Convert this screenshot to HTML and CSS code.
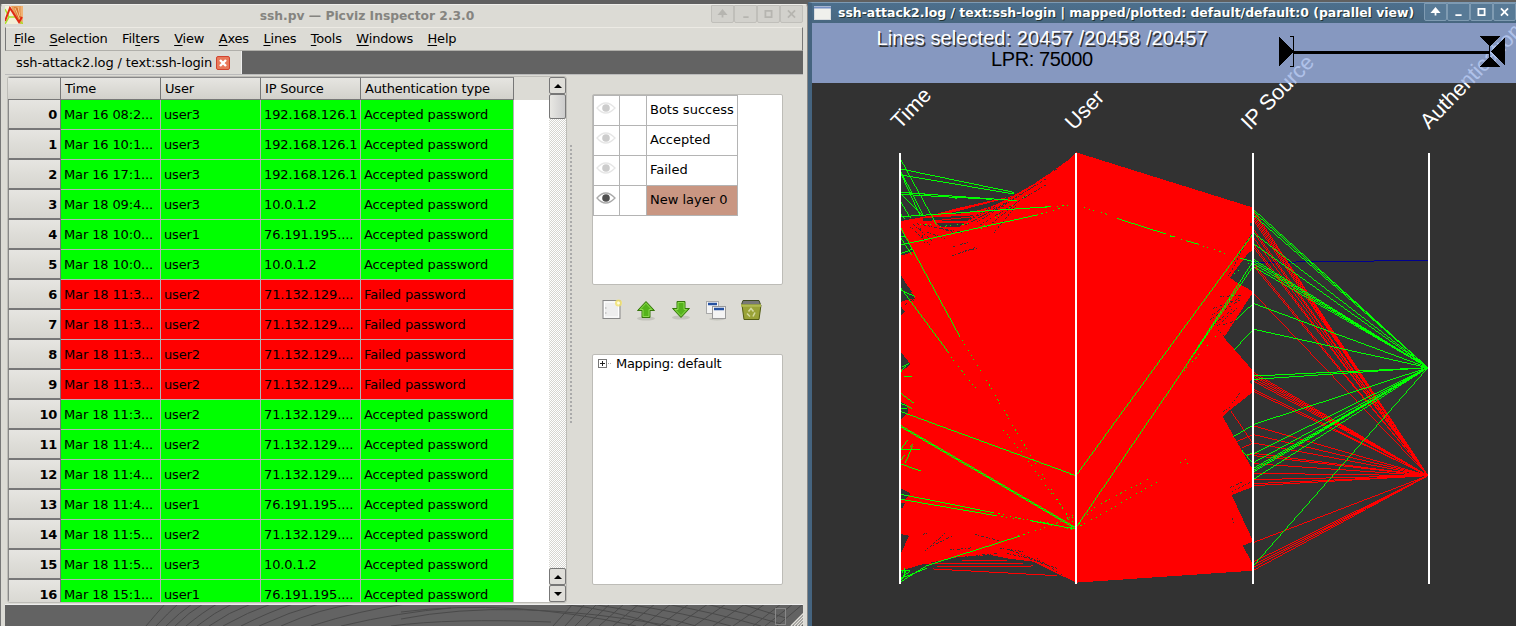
FILE: index.html
```html
<!DOCTYPE html>
<html lang="en">
<head>
<meta charset="utf-8">
<title>Picviz Inspector</title>
<link rel="stylesheet" href="styles.css">
</head>
<body>
<div class="desktop">
<section class="win main-win">
  <header class="titlebar">
    <svg class="app-icon" width="18" height="18" viewBox="0 0 18 18"><rect width="18" height="18" fill="#f3efd8"/><path d="M6 0h12v18h-3L8 6z" fill="#e9a05c"/><path d="M9 1l5 1 3 14-5-5z" fill="#d9742e"/><path d="M10 2l5 12M13 1l2 9M17 0v18" stroke="#f6c58c" fill="none"/><path d="M0 3l4 8-4 7M4 11h6l8 7" stroke="#a9e02a" stroke-width="1.500" fill="none"/><path d="M0 15L5 2l9 14 3-5" stroke="#e02a14" stroke-width="2" fill="none"/></svg>
    <div class="title">ssh.pv — Picviz Inspector 2.3.0</div>
    <div class="wbtns">
      <svg viewBox="0 0 23 18"><path d="M11.500 5v8M8 9l3.500-4 3.500 4z"/></svg>
      <svg viewBox="0 0 23 18"><path d="M9 12.500h6"/></svg>
      <svg viewBox="0 0 23 18"><path d="M8 5.500h7v7H8z" class="hollow"/></svg>
      <svg viewBox="0 0 23 18"><path d="M7.500 5l8 8M15.500 5l-8 8"/></svg>
    </div>
  </header>
  <nav class="menu"><span><u>F</u>ile</span><span><u>S</u>election</span><span>Fil<u>t</u>ers</span><span><u>V</u>iew</span><span><u>A</u>xes</span><span><u>L</u>ines</span><span><u>T</u>ools</span><span><u>W</u>indows</span><span><u>H</u>elp</span></nav>
  <div class="tabs"><div class="tab"><span>ssh-attack2.log / text:ssh-login</span><svg width="14" height="14" viewBox="0 0 14 14"><rect x=".5" y=".5" width="13" height="13" rx="1.500" fill="#e8795a" stroke="#d2432e"/><path d="M4 4l6 6M10 4l-6 6" stroke="#fff" stroke-width="2.400"/></svg></div></div>
  <div class="content">
    <div class="table-frame">
      <div class="table-view">
      <table class="grid">
        <thead><tr><th class="num"></th><th class="c1">Time</th><th class="c2">User</th><th class="c3">IP Source</th><th class="c4">Authentication type</th></tr></thead>
        <tbody>
        <tr><th>0</th><td>Mar 16 08:2...</td><td>user3</td><td>192.168.126.1</td><td>Accepted password</td></tr>
        <tr><th>1</th><td>Mar 16 10:1...</td><td>user3</td><td>192.168.126.1</td><td>Accepted password</td></tr>
        <tr><th>2</th><td>Mar 16 17:1...</td><td>user3</td><td>192.168.126.1</td><td>Accepted password</td></tr>
        <tr><th>3</th><td>Mar 18 09:4...</td><td>user3</td><td>10.0.1.2</td><td>Accepted password</td></tr>
        <tr><th>4</th><td>Mar 18 10:0...</td><td>user1</td><td>76.191.195....</td><td>Accepted password</td></tr>
        <tr><th>5</th><td>Mar 18 10:0...</td><td>user3</td><td>10.0.1.2</td><td>Accepted password</td></tr>
        <tr class="fail"><th>6</th><td>Mar 18 11:3...</td><td>user2</td><td>71.132.129....</td><td>Failed password</td></tr>
        <tr class="fail"><th>7</th><td>Mar 18 11:3...</td><td>user2</td><td>71.132.129....</td><td>Failed password</td></tr>
        <tr class="fail"><th>8</th><td>Mar 18 11:3...</td><td>user2</td><td>71.132.129....</td><td>Failed password</td></tr>
        <tr class="fail"><th>9</th><td>Mar 18 11:3...</td><td>user2</td><td>71.132.129....</td><td>Failed password</td></tr>
        <tr><th>10</th><td>Mar 18 11:3...</td><td>user2</td><td>71.132.129....</td><td>Accepted password</td></tr>
        <tr><th>11</th><td>Mar 18 11:4...</td><td>user2</td><td>71.132.129....</td><td>Accepted password</td></tr>
        <tr><th>12</th><td>Mar 18 11:4...</td><td>user2</td><td>71.132.129....</td><td>Accepted password</td></tr>
        <tr><th>13</th><td>Mar 18 11:4...</td><td>user1</td><td>76.191.195....</td><td>Accepted password</td></tr>
        <tr><th>14</th><td>Mar 18 11:5...</td><td>user2</td><td>71.132.129....</td><td>Accepted password</td></tr>
        <tr><th>15</th><td>Mar 18 11:5...</td><td>user3</td><td>10.0.1.2</td><td>Accepted password</td></tr>
        <tr><th>16</th><td>Mar 18 15:1...</td><td>user1</td><td>76.191.195....</td><td>Accepted password</td></tr>
        </tbody>
      </table>
      </div>
      <div class="scroll">
        <div class="sbtn"><i class="up"></i></div>
        <div class="thumb"></div>
        <div class="track"></div>
        <div class="sbtn"><i class="up"></i></div>
        <div class="sbtn"><i class="down"></i></div>
      </div>
    </div>
    <div class="splitter"></div>
    <aside class="side">
      <div class="layers">
        <table>
          <tr><td class="eye"><svg width="20" height="12" viewBox="0 0 20 12"><path d="M1 6q8.500-10 18 0q-9.500 10-18 0z" fill="#fff" stroke="#e6e6e6" stroke-width="1.300"/><circle cx="10" cy="6" r="3.800" fill="#ccc"/></svg></td><td class="lock"></td><td class="lname">Bots success</td></tr>
          <tr><td class="eye"><svg width="20" height="12" viewBox="0 0 20 12"><path d="M1 6q8.500-10 18 0q-9.500 10-18 0z" fill="#fff" stroke="#e6e6e6" stroke-width="1.300"/><circle cx="10" cy="6" r="3.800" fill="#ccc"/></svg></td><td></td><td class="lname">Accepted</td></tr>
          <tr><td class="eye"><svg width="20" height="12" viewBox="0 0 20 12"><path d="M1 6q8.500-10 18 0q-9.500 10-18 0z" fill="#fff" stroke="#e6e6e6" stroke-width="1.300"/><circle cx="10" cy="6" r="3.800" fill="#ccc"/></svg></td><td></td><td class="lname">Failed</td></tr>
          <tr><td class="eye"><svg width="20" height="12" viewBox="0 0 20 12"><path d="M1 6q8.500-10 18 0q-9.500 10-18 0z" fill="#fff" stroke="#aaa" stroke-width="1.300"/><circle cx="10" cy="6" r="3.800" fill="#505050"/></svg></td><td></td><td class="lname sel">New layer 0</td></tr>
        </table>
      </div>
      <div class="tools">
        <svg width="22" height="24" viewBox="0 0 22 24"><rect x="3" y="3.500" width="17" height="18" fill="#eee" stroke="#888"/><rect x="4.500" y="5" width="14" height="15" fill="none" stroke="#fff"/><path d="M5 11h1.500M5 16h1.500" stroke="#aaa"/><circle cx="18.500" cy="6" r="3.500" fill="#f4e36a" opacity=".8"/><circle cx="18.500" cy="6" r="1.500" fill="#fffce0"/></svg>
        <svg width="22" height="24" viewBox="0 0 22 24"><ellipse cx="11" cy="21.500" rx="9" ry="2" fill="#c4c4bd"/><path d="M11 4.500l8.500 9h-4.500v7H7v-7H2.500z" fill="#55b31c" stroke="#37760c"/><path d="M11 6.200l5.800 6.300H14v7H8v-7H5z" fill="none" stroke="#8bd94e"/></svg>
        <svg width="22" height="24" viewBox="0 0 22 24"><ellipse cx="11" cy="20.500" rx="9" ry="2" fill="#c4c4bd"/><path d="M11 20.500l8.500-9h-4.500v-7H7v7H2.500z" fill="#55b31c" stroke="#37760c"/><path d="M11 18.700l5.800-6.200H14v-7H8v7H5z" fill="none" stroke="#8bd94e"/></svg>
        <svg width="22" height="24" viewBox="0 0 22 24"><ellipse cx="12" cy="22" rx="8" ry="1.500" fill="#c4c4bd"/><rect x="1.500" y="4.500" width="12" height="12" fill="#f4f4f4" stroke="#aaa"/><path d="M3 7h9" stroke="#2551a0" stroke-width="2.500"/><rect x="7.500" y="9.500" width="13" height="12" fill="#f4f4f4" stroke="#999"/><path d="M9 12h10" stroke="#2551a0" stroke-width="2.500"/></svg>
        <svg width="22" height="24" viewBox="0 0 22 24"><path d="M2 8h19l-2 14.500H4z" fill="#9aa338" stroke="#535d14"/><path d="M3 3.500h16l1.500 4H1.500z" fill="#777" stroke="#3f4a20"/><path d="M1 8.500h20" stroke="#b0ba52" stroke-width="2.500"/><path d="M8.500 14.500l2.500-3 2.500 3M15 15.500l-2 4M10 19.500l-3-3" stroke="#d3d9a0" stroke-width="1.600" fill="none"/></svg>
      </div>
      <div class="tree"><svg width="14" height="11" viewBox="0 0 14 11"><rect x=".5" y="1.500" width="8" height="8" fill="#fff" stroke="#777"/><path d="M2 5.500h5M4.500 3v5" stroke="#222"/><path d="M10 5.500h4" stroke="#aaa" stroke-dasharray="1 1"/></svg><span>Mapping: default</span></div>
    </aside>
  </div>
  <footer class="status">
    <svg width="799" height="21" viewBox="4 605 799 21"><g stroke="#4a4a4a" fill="none" stroke-width="1"><path d="M145 626q10-12 19-22M155 626q12-13 22-22M165 626q14-14 26-22M174 626q14-14 28-22M185 626q17-14 31-22M196 626q18-14 35-22M208 626q20-14 42-22M222 626q25-14 48-22M240 626q28-14 52-22M258 626q30-14 60-22M280 626q40-18 75-22M310 626q50-16 95-22M340 626q60-14 110-18M390 626q60-8 160-4"/><path d="M400 619q110-22 270 7M400 612q110-14 235 14M560 604q50 5 100 22M590 604q60 9 105 22M625 604q60 9 105 22M665 604q50 9 95 22M705 604q40 9 75 20M740 604l45 14"/><path d="M552 626l20-22M564 626l20-22M574 626l22-22M585 626l24-22M598 626l25-22M612 626l26-22M627 626l27-22M642 626l28-22M658 626l30-22M675 626l32-22M693 626l32-22M712 626l32-22M732 626l32-22M752 626l28-22M764 626l28-22M776 626l26-22"/></g><rect x="774.500" y="608.500" width="10" height="16" fill="none" stroke="#888"/><path d="M790 626l13-13M793 626l10-10M796 626l7-7M799 626l4-4" stroke="#e4e2dc" stroke-width="1.500"/></svg>
  </footer>
</section>

<section class="win plot-win">
  <header class="ptitle">
    <svg width="17" height="14" viewBox="0 0 17 14"><rect x=".5" y=".5" width="16" height="13" fill="#f0f0ec" stroke="#d9dcdf"/><path d="M0 1.500h17" stroke="#7590c4" stroke-width="2"/></svg>
    <div class="title">ssh-attack2.log / text:ssh-login | mapped/plotted: default/default:0 (parallel view)</div>
    <div class="wbtns">
      <svg viewBox="0 0 23 18"><path d="M11.500 5v8M8 9l3.500-4 3.500 4z"/></svg>
      <svg viewBox="0 0 23 18"><path d="M8 12.500h7"/></svg>
      <svg viewBox="0 0 23 18"><path d="M8 5.500h7v7H8z" class="hollow"/></svg>
      <svg viewBox="0 0 23 18"><path d="M7.500 5l8 8M15.500 5l-8 8"/></svg>
    </div>
  </header>
  <svg class="plot" width="704" height="603" viewBox="812 23 704 603">
    <rect x="812" y="23" width="704" height="603" fill="#323232"/>
    <g class="lines">
    <!-- Time to User -->
    <g transform="translate(890 145) scale(.33333)">
      <path class="area" d="M33 228L120 212 200 190 370 152 430 118 500 70 535 45 560 22V1313L500 1285 430 1250 350 1240 300 1230 200 1237 100 1257 33 1277z"/>
      <path class="hole" d="M170 207L345 161 365 156 300 186 230 205zM100 219L250 211 235 227 100 227zM140 233H225L210 245H150zM33 255L70 320 33 332zM33 390L75 460 50 465 33 470zM33 485L45 500 33 512zM33 622L62 658 40 675 33 672zM33 770L50 780 55 800 33 825zM33 1030L62 1045 45 1063H33zM33 1075H44L38 1088H33zM33 1167L57 1172 33 1225z"/>
      <path class="noise" d="M60 245L120 300M70 238L130 290M80 236L215 262M90 250L105 302M110 262L165 280M150 250L190 262M200 245L320 182M225 240L350 175M240 222L500 72M250 228L440 120M260 232L470 100M270 240L470 118M290 248L410 150M310 265L380 180M190 305L240 290M185 333L255 308M225 318L260 310M45 440L75 470M40 410L70 445M45 480L75 458M105 1218L165 1165M120 1205L190 1172M180 1215L250 1208M255 1168L330 1188M330 1210L400 1220M350 1225L420 1240M360 1215L450 1250M400 1235L500 1270M440 1240L515 1288M190 1240L320 1225M100 1168L115 1163"/>
      <path class="r" d="M215 1247H350M100 1257H400M140 1265L430 1263M130 1272L500 1292M33 238L250 215M150 232H240"/>
      <path class="g" d="M33 45L140 240M33 72L372 142M33 90L372 147M33 80L100 212M33 86L90 212M33 142L380 167M33 148L305 163M40 142L145 150 200 160M33 215L480 185M33 300L440 210M33 250L208 572M33 430L175 622M33 280L65 330M33 325L70 312M33 172L62 220M36 150L95 210M33 208L45 222M33 275H48M33 435L75 455M35 667L58 655M33 680L48 662M42 694H66M33 745L72 775M33 775L65 790M33 790H50M33 800L558 992M33 842L558 1148M33 846L558 1152M33 912L53 885M33 915H90M45 955L68 903M33 945L45 930M60 905L70 895M33 957L92 978M33 1048L310 1103M33 1063L318 1112M33 1310L110 1262 390 1173M33 1300L110 1270M33 1275L60 1278 33 1300M35 1285L45 1270V1295M50 1275L35 1305"/>
      <path class="gd" d="M450 188L545 181M440 210L515 188M175 622L190 645 270 745M208 572L295 715 340 793 545 1137M340 855L390 915 558 1145M310 1103L558 1155M318 1112L480 1135M385 1173L490 1140 558 1107M530 1117L558 1120M90 240H135M150 245L245 235M260 260L410 150"/>
      <path class="g" d="M420 1127L545 1150M450 1130L490 1140"/>
    </g>
    <!-- User to IP Source -->
    <g transform="translate(1070 145) scale(.33333)">
      <path class="area" d="M18 22L550 188V440L462 578 550 678V740L480 795 458 815 550 977V1025L485 1050 550 1190 518 1202 550 1260V1277L18 1313z"/>
      <path class="hole" d="M550 312L530 330 500 370 480 398 500 412 550 440zM541 233h5v11h-5zM550 700L538 712 550 722z"/>
      <path class="noise" d="M530 290L475 395M545 268L490 350M450 455L515 450M430 490L510 460M425 510L500 462M420 525L510 465M430 540L490 490M440 545L500 490M445 555L465 575M460 540L490 530M485 1040L545 1010M480 1028L520 1010M485 775L510 745M460 800L480 785M486 1120L490 1135"/>
      <path class="r" d="M482 797L545 890M500 890L550 868M515 910L550 893M530 932L550 927"/>
      <path class="g" d="M550 265L238 690 18 992M550 348L330 690 18 1148M550 362L360 645M140 220L285 266M300 273L312 276M350 288L385 297M510 340L550 350M550 475L498 525M550 553L492 615M550 840L490 875M550 922L528 932M515 915L550 957M0 987L18 992M0 1147L18 1152"/>
      <path class="gd" d="M42 187L110 208M285 266L480 330M550 345L480 395M550 365L430 530M330 690L440 570M18 1148L75 1085 240 1000M18 1150L100 1105 280 1000M330 952L358 940M350 955L360 952"/>
    </g>
    <!-- IP Source to Authentication -->
    <g transform="translate(1070 145) scale(.33333)">
      <path class="b" d="M552 353H678V350H912V347H1074"/>
      <path class="r" d="M552 198L1074 992M552 204L1074 992M552 212L1074 992M552 220L1074 992M552 228L1074 992M552 255L1074 992M552 263L1074 992M552 280L1074 992M552 300L1074 992M552 308L1074 992M552 357L1074 992M552 365L1074 992M552 447L1074 992M552 683L1074 992M552 689L1074 992M552 695L1074 992M552 702L1074 992M552 709L1074 992M552 733L1074 992M552 740L1074 992M552 843L1074 992M552 869L1074 992M552 894L1074 992M552 925L1074 992M552 932L1074 992M552 956L1074 992M552 985L1074 992M552 1004L1074 992M552 1016L1074 992M552 1022L1074 992M552 1192L1074 992M552 1250L1074 992M552 1259L1074 992M552 1266L1074 992M552 1275L1074 992"/>
      <path class="g" d="M552 195L1074 668M552 202L1074 668M552 212L1074 668M552 265L1074 668M552 297L1074 668M552 344L1074 668M552 350L1074 668M552 357L1074 668M552 366L1074 668M552 476L1074 668M552 553L1074 668M552 693L1074 668M552 703L1074 668M552 838L1074 668M552 925L1074 668M552 952L1074 668M552 969L1074 668M552 975L1074 668M552 980L1074 668M552 1002L1074 668M552 1260L1074 668"/>
    </g>
    <path fill="#fff" d="M899 153h2v431h-2zM1075 153h2v431h-2zM1252 153h2v431h-2zM1428 153h2v431h-2z"/>
    </g>
    <g class="axis-label">
      <text transform="translate(900 130) rotate(-46)">Time</text>
      <text transform="translate(1074 131) rotate(-46)">User</text>
      <text transform="translate(1250 131) rotate(-46)">IP Source</text>
      <text transform="translate(1429 130) rotate(-46)">Authentication type</text>
    </g>
    <rect x="812" y="23" width="704" height="60" fill="#9bb1e3" fill-opacity=".8"/>
    <g class="info">
      <text x="878" y="46.500" fill="#333" textLength="331">Lines selected: 20457 /20458 /20457</text>
      <text x="876.500" y="45" fill="#fff" textLength="331">Lines selected: 20457 /20458 /20457</text>
      <text x="991" y="66" fill="#000" textLength="102">LPR: 75000</text>
    </g>
    <g shape-rendering="crispEdges"><path d="M1279 37l15 15-15 14zM1293 51h197v3h-197zM1479 36h21l-10 10v11l10 10h-21l10-10V46zM1505 37v29l-14-14z"/><path d="M1290 36.500h3.500v30h-3.500" fill="none" stroke="#000"/></g>
  </svg>
</section>
</div>
</body>
</html>
```
FILE: styles.css
```css
* { box-sizing: border-box; }
body { margin: 0; background: #606060; font: 13px "DejaVu Sans", sans-serif; color: #000; }
.desktop { width: 1516px; height: 626px; display: flex; overflow: hidden; padding-top: 2px; background: #606060; }
.win { display: flex; flex-direction: column; }
.title { white-space: nowrap; }
svg { display: block; flex: none; }

.main-win { width: 808px; padding: 0 4px 0 4px; border-left: 1px solid #777; border-right: 1px solid #888; margin-top: 2px; background: #dcdbd5; border-top: 1px solid #efeeea; border-radius: 3px 3px 0 0; }
.titlebar { height: 22px; display: flex; flex: none; }
.app-icon { margin-top: 1px; }
.titlebar .title { flex: 1; text-align: center; font-weight: bold; font-size: 12.300px; line-height: 22px; color: #858480; }
.wbtns { display: flex; }
.wbtns svg { width: 23px; height: 18px; border: 1px solid #c0bfba; background: #d2d1cc; border-radius: 0 0 2px 2px; }
.wbtns path { stroke: #b6b5b0; fill: #b6b5b0; stroke-width: 2; }
.wbtns path.hollow { fill: none; }
.menu { height: 24px; flex: none; display: flex; border-top: 1px solid #eceae4; border-right: 1px solid #777; border-left: 1px solid #777; border-bottom: 1px solid #b0afaa; padding-left: 8px; line-height: 22px; letter-spacing: -.2px; }
.menu span { margin-right: 14.500px; }
.menu u { text-underline-offset: 2px; }
.tabs { height: 23px; flex: none; background: #636363; display: flex; }
.tab { width: 237px; background: #dcdbd5; border-right: 1px solid #eee; display: flex; align-items: center; padding-left: 11px; gap: 4px; }
.tab span { white-space: nowrap; width: 196px; letter-spacing: -.130px; }
.content { flex: 1; min-height: 0; display: flex; border-top: 1px solid #bbb; padding: 1px 0 0 2px; border-bottom: 1px solid #eee; }
.table-frame { width: 560px; height: 527px; display: flex; border: 1px solid #bdbcb7; border-radius: 3px; overflow: hidden; }
.table-view { flex: 1; background: linear-gradient(#dcdbd5 23px, #fff 23px); overflow: hidden; }
.grid { border-collapse: separate; border-spacing: 0; table-layout: fixed; width: 506px; letter-spacing: -.130px; }
.grid th, .grid td { padding: 0 3px; overflow: hidden; white-space: nowrap; }
.grid thead th { height: 23px; text-align: left; font-weight: normal; background: linear-gradient(#e6e5e1, #d2d1cb); border-right: 1px solid #777; border-bottom: 1px solid #777; border-top: 1px solid #888; padding: 0 4px; letter-spacing: -.2px; }
.grid .num { width: 53px; }
.grid .c1, .grid .c2, .grid .c3 { width: 100px; }
.grid .c4 { width: 153px; }
.grid tbody th { height: 30px; text-align: right; background: linear-gradient(#e6e5e1, #d6d5cf); border-right: 1px solid #777; border-bottom: 2px solid #777; border-left: 1px solid #888; letter-spacing: -.300px; }
.grid td { background: #0f0; border-right: 1px solid #b4b4b4; border-bottom: 1px solid #b4b4b4; }
.grid .fail td { background: #f00; }
.scroll { width: 17px; display: flex; flex-direction: column; }
.sbtn { height: 17px; border: 1px solid #777; border-radius: 2px; background: #dfded9; display: flex; align-items: center; justify-content: center; }
.sbtn i { border: 4px solid transparent; }
.sbtn .up { border-top: 0; border-bottom-color: #000; }
.sbtn .down { border-bottom: 0; border-top-color: #000; }
.thumb { height: 25px; border: 1px solid #777; border-radius: 2px; background: linear-gradient(90deg, #e8e7e3, #ccc); }
.track { flex: 1; background: repeating-conic-gradient(#d6d5d0 0 25%, #fff 0 50%) 0 0 / 2px 2px; }
.splitter { width: 5px; height: 280px; margin: 68px 18px 0 2px; background: radial-gradient(circle, #aaa 1px, transparent 1.200px) 0 0 / 4px 4px; }
.side { width: 191px; display: flex; flex-direction: column; }
.layers { margin-top: 18px; height: 191px; border: 1px solid #bdbcb7; border-radius: 2px; background: #fff; flex: none; }
.layers table { border-collapse: collapse; width: 145px; table-layout: fixed; }
.layers td { border: 1px solid #b4b4b4; height: 30px; padding: 0 0 2px 3px; white-space: nowrap; }
.layers td.eye { width: 26px; padding: 0 0 5px 2px; }
.layers td.lock { width: 27px; }
.layers td.lname { width: 91px; }
.layers .sel { background: #c99682; }
.tools { display: flex; gap: 13px; padding: 12px 0 0 8px; height: 69px; }
.tree { height: 231px; border: 1px solid #bdbcb7; border-radius: 2px; background: #fff; padding: 1px 0 0 5px; display: flex; gap: 4px; line-height: 16px; letter-spacing: -.300px; }
.tree svg { margin-top: 2px; }
.status { height: 21px; flex: none; background: #636363; }

.plot-win { width: 708px; border-left: 4px solid #45647f; border-top: 1px solid #7d9ab3; }
.ptitle { height: 20px; background: linear-gradient(#4c6f8d, #486780); display: flex; padding-left: 2px; flex: none; }
.ptitle > svg { margin-top: 3px; }
.ptitle .title { flex: 1; padding-left: 7px; color: #fff; font-weight: bold; font-size: 12.430px; line-height: 20px; text-shadow: 1px 1px 0 #233; }
.ptitle .wbtns svg { background: #587a96; border-color: #7f9bb2; }
.ptitle .wbtns path { stroke: #fff; fill: #fff; }
.ptitle .wbtns path.hollow { fill: none; }
.lines { shape-rendering: crispEdges; fill: none; }
.lines path { stroke-width: 3; }
.area { fill: #f00; }
.hole { fill: #323232; }
.noise { stroke: #323232; stroke-dasharray: 6 4 3 7 9 5; }
.r { stroke: #f00; }
.g { stroke: #0f0; }
.gd { stroke: #0f0; stroke-dasharray: 3 12 5 9 3 20; }
.b { stroke: #000090; }
.axis-label, .info { font: 20px "Liberation Sans", sans-serif; }
.axis-label { fill: #fff; font-size: 21.500px; }
```
